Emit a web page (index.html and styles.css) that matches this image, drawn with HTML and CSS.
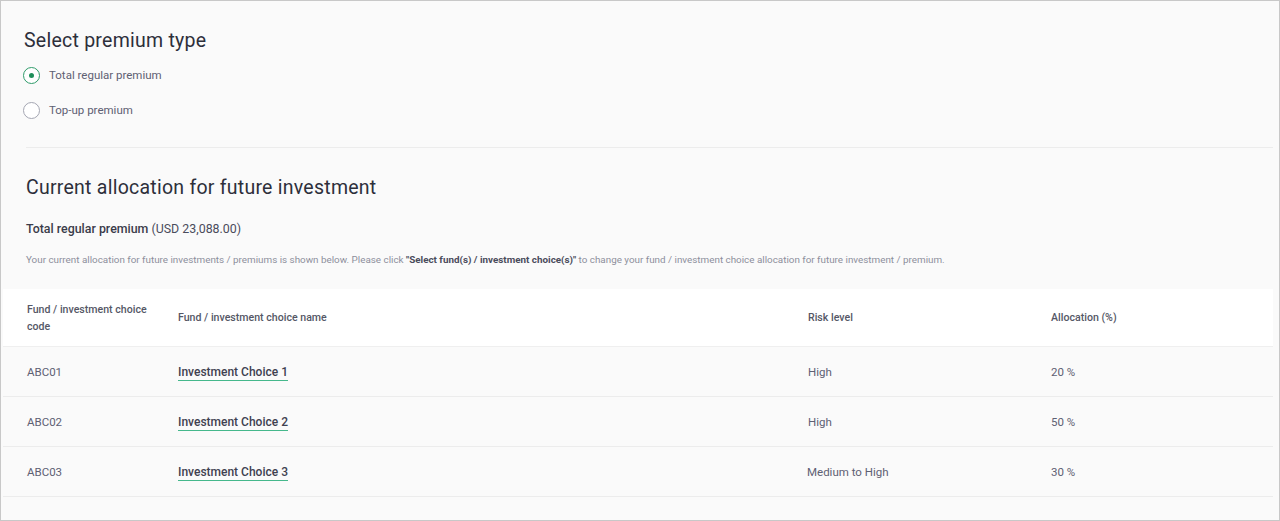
FILE: index.html
```html
<!DOCTYPE html>
<html>
<head>
<meta charset="utf-8">
<link rel="stylesheet" href="styles.css">
</head>
<body>
<div class="frame">
  <section class="premium">
    <h2 class="title">Select premium type</h2>
    <div class="radios">
      <label class="radio"><span class="dot checked"></span><span>Total regular premium</span></label>
      <label class="radio"><span class="dot"></span><span>Top-up premium</span></label>
    </div>
  </section>
  <div class="sep"></div>
  <section class="alloc">
    <h2 class="title">Current allocation for future investment</h2>
    <p class="total"><b>Total regular premium</b> (USD 23,088.00)</p>
    <p class="desc">Your current allocation for future investments / premiums is shown below. Please click <b>"Select fund(s) / investment choice(s)"</b> to change your fund / investment choice allocation for future investment / premium.</p>
  </section>
  <div class="table">
    <div class="row head">
      <div class="c1">Fund / investment choice code</div>
      <div class="c2">Fund / investment choice name</div>
      <div class="c3">Risk level</div>
      <div class="c4">Allocation (%)</div>
    </div>
    <div class="row">
      <div class="c1">ABC01</div>
      <div class="c2"><a class="link">Investment Choice 1</a></div>
      <div class="c3">High</div>
      <div class="c4">20 %</div>
    </div>
    <div class="row">
      <div class="c1">ABC02</div>
      <div class="c2"><a class="link">Investment Choice 2</a></div>
      <div class="c3">High</div>
      <div class="c4">50 %</div>
    </div>
    <div class="row">
      <div class="c1">ABC03</div>
      <div class="c2"><a class="link">Investment Choice 3</a></div>
      <div class="c3 shift">Medium to High</div>
      <div class="c4">30 %</div>
    </div>
  </div>
</div>
</body>
</html>
```
FILE: styles.css
```css
* { box-sizing: border-box; }
html, body { margin: 0; padding: 0; }
body {
  font-family: Roboto, "Liberation Sans", sans-serif;
  color: #5e6073;
  background: #fff;
}
.frame {
  width: 1280px;
  height: 521px;
  border: 1px solid #c8c8c8;
  background: #fafafa;
  overflow: hidden;
  padding-top: 28px;
}
.title {
  margin: 0;
  font-size: 19.5px;
  font-weight: 400;
  color: #2d2f3a;
  line-height: 24px;
  letter-spacing: 0.25px;
}
.premium { padding-left: 23px; }
.radios {
  display: flex;
  flex-direction: column;
  gap: 17px;
  margin: 13px 0 0 -1px;
}
.radio {
  display: flex;
  align-items: center;
  gap: 9px;
  font-size: 11.5px;
  line-height: 18px;
  color: #5e6073;
}
.dot {
  width: 17px;
  height: 17px;
  border-radius: 50%;
  border: 1px solid #a4a6b2;
  background: #fff;
  display: flex;
  align-items: center;
  justify-content: center;
}
.dot.checked { border-color: #2f9b6a; }
.dot.checked::after {
  content: "";
  width: 5px;
  height: 5px;
  border-radius: 50%;
  background: #1f8f5a;
}
.sep {
  margin: 28px 6px 0 25px;
  height: 1px;
  background: #ececec;
}
.alloc { padding-left: 25px; padding-top: 28px; }
.total {
  margin: 20px 0 0;
  font-size: 12.4px;
  line-height: 18px;
  color: #4a4c5c;
}
.total b { font-weight: 500; color: #3a3c4a; }
.desc {
  margin: 15px 0 0;
  font-size: 9.85px;
  line-height: 14px;
  color: #8d8f9c;
}
.desc b { font-weight: 700; color: #4a4c5c; }
.table {
  margin: 22px 6px 0 2px;
}
.row {
  display: flex;
  align-items: center;
  height: 50px;
  border-bottom: 1px solid #ececec;
  font-size: 11.5px;
  color: #5e6073;
}
.row.head {
  height: 58px;
  background: #fff;
  border-bottom: 1px solid #efefef;
  font-weight: 500;
  font-size: 10.6px;
  color: #555766;
  line-height: 17px;
}
.c1 { width: 151px; padding-left: 24px; padding-right: 0; }
.c2 { width: 630px; padding-left: 24px; }
.c3 { width: 243px; padding-left: 24px; }
.c3.shift { padding-left: 23px; }
.c4 { flex: 1; padding-left: 24px; }
.link {
  font-weight: 500;
  color: #3f4150;
  text-decoration: none;
  border-bottom: 1.5px solid #45b88c;
  padding-bottom: 1px;
  font-size: 12px;
}
```
